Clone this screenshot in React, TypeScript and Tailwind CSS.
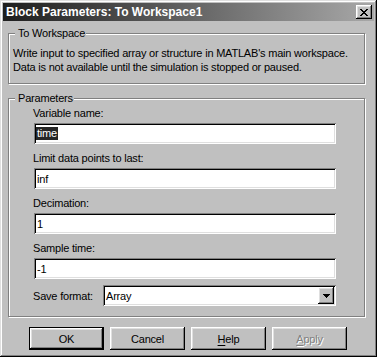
import React from "react";

const raised =
  "shadow-[inset_-1px_-1px_0_#000,inset_1px_1px_0_#fff,inset_-2px_-2px_0_#808080,inset_2px_2px_0_#dfdfdf]";
const sunken =
  "shadow-[inset_1px_1px_0_#808080,inset_-1px_-1px_0_#fff,inset_2px_2px_0_#000,inset_-2px_-2px_0_#dfdfdf]";

function CloseGlyph() {
  const px: [number, number][] = [
    [0, 0], [1, 0], [6, 0], [7, 0],
    [1, 1], [2, 1], [5, 1], [6, 1],
    [2, 2], [3, 2], [4, 2], [5, 2],
    [3, 3], [4, 3],
    [2, 4], [3, 4], [4, 4], [5, 4],
    [1, 5], [2, 5], [5, 5], [6, 5],
    [0, 6], [1, 6], [6, 6], [7, 6],
  ];
  return (
    <svg width="8" height="7" viewBox="0 0 8 7" shapeRendering="crispEdges">
      {px.map(([x, y], i) => (
        <rect key={i} x={x} y={y} width="1" height="1" fill="#000" />
      ))}
    </svg>
  );
}

function ArrowGlyph() {
  return (
    <svg width="7" height="4" viewBox="0 0 7 4" shapeRendering="crispEdges">
      <path d="M0 0h7v1h-1v1h-1v1h-1v1h-1v-1h-1v-1h-1v-1h-1z" fill="#000" />
    </svg>
  );
}

function Field({ label, value, selected }: { label: string; value: string; selected?: boolean }) {
  return (
    <div className="flex flex-col">
      <div className="h-[14px] mb-[3px]">{label}</div>
      <div className={`ml-[1px] w-[302px] h-[21px] bg-white flex items-center pl-[2px] ${sunken}`}>
        {selected ? (
          <span className="bg-[#262626] text-white leading-[13px] pl-[1px] pr-[1px]">{value}</span>
        ) : (
          <span className="pl-[1px]">{value}</span>
        )}
      </div>
    </div>
  );
}

export default function App() {
  return (
    <div
      className="w-[377px] h-[358px] bg-white overflow-hidden"
      style={{ fontFamily: '"Liberation Sans", Arial, sans-serif' }}
    >
      <div
        className={`w-[377px] h-[357px] bg-[#c0c0c0] p-[3px] flex flex-col shadow-[inset_-1px_-1px_0_#000,inset_1px_1px_0_#dfdfdf,inset_-2px_-2px_0_#808080,inset_2px_2px_0_#fff]`}
      >
        {/* Title bar */}
        <div className="h-[18px] shrink-0 flex items-center justify-between pl-[3px] pr-[2px] bg-[linear-gradient(to_right,#1e1e1e,#a8a8a8)]">
          <span className="text-white font-bold text-[12px] leading-[14px]">
            Block Parameters: To Workspace1
          </span>
          <div className={`w-[16px] h-[14px] bg-[#c0c0c0] flex items-center justify-center ${raised}`}>
            <CloseGlyph />
          </div>
        </div>

        {/* Body */}
        <div className="pl-[5px] flex flex-col text-[11px] leading-[14px] tracking-[-0.2px] text-black">
          {/* To Workspace group */}
          <div className="relative mt-[12px] w-[357px] h-[51px] border border-[#808080] shadow-[1px_1px_0_#fff,inset_1px_1px_0_#fff] pt-[12px] pl-[4px]">
            <span className="absolute left-[6px] top-[-8px] bg-[#c0c0c0] pl-[3px] pr-[1px] leading-[14px]">
              To Workspace
            </span>
            <div>Write input to specified array or structure in MATLAB's main workspace.</div>
            <div>Data is not available until the simulation is stopped or paused.</div>
          </div>

          {/* Parameters group */}
          <div className="relative mt-[14px] w-[357px] h-[219px] border border-[#808080] shadow-[1px_1px_0_#fff,inset_1px_1px_0_#fff] pt-[7px] pl-[24px] flex flex-col gap-[7px]">
            <span className="absolute left-[6px] top-[-8px] bg-[#c0c0c0] pl-[3px] pr-[1px] leading-[14px]">
              Parameters
            </span>
            <Field label="Variable name:" value="time" selected />
            <Field label="Limit data points to last:" value="inf" />
            <Field label="Decimation:" value="1" />
            <Field label="Sample time:" value="-1" />
            <div className="flex items-center -mt-[1px]">
              <div className="w-[70px]">Save format:</div>
              <div className={`w-[233px] h-[21px] bg-white p-[2px] flex items-center ${sunken}`}>
                <span className="flex-1 pl-[1px]">Array</span>
                <div className={`w-[16px] h-[17px] bg-[#c0c0c0] flex items-center justify-center ${raised}`}>
                  <ArrowGlyph />
                </div>
              </div>
            </div>
          </div>

          {/* Buttons */}
          <div className="mt-[10px] ml-[21px] flex gap-[6px]">
            <div className="w-[75px] h-[23px] border border-black">
              <div className={`w-full h-full flex items-center justify-center ${raised}`}>OK</div>
            </div>
            <div className={`w-[75px] h-[23px] flex items-center justify-center ${raised}`}>Cancel</div>
            <div className={`w-[75px] h-[23px] flex items-center justify-center ${raised}`}>
              <span>
                <span className="underline underline-offset-[2px]">H</span>elp
              </span>
            </div>
            <div className={`w-[75px] h-[23px] flex items-center justify-center ${raised}`}>
              <span className="text-[#808080] [text-shadow:1px_1px_0_#fff]">
                <span className="underline underline-offset-[2px]">A</span>pply
              </span>
            </div>
          </div>
        </div>
      </div>
    </div>
  );
}
